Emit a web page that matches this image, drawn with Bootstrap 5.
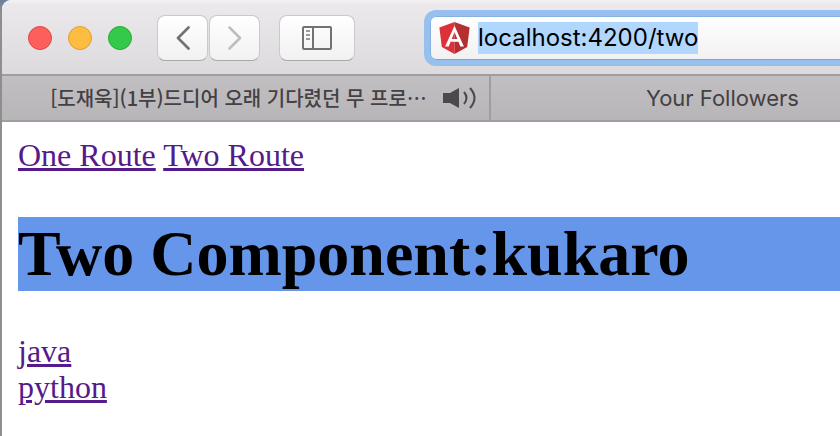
<!DOCTYPE html>
<html lang="ko">
<head>
<meta charset="utf-8">
<meta name="viewport" content="width=device-width, initial-scale=1">
<title>localhost:4200/two</title>
<link href="https://cdn.jsdelivr.net/npm/bootstrap@5.3.0/dist/css/bootstrap.min.css" rel="stylesheet">
<style>
  body { background: linear-gradient(#6d8099, #8e8e8e 12px); font-family: Inter, "Noto Sans CJK KR", sans-serif; }
  .window { margin-left: 2px; min-height: 100vh; border-top-left-radius: 9px; background: #fff; }
  .toolbar { height: 76px; padding-top: 2px; padding-left: 26px; background: linear-gradient(#f4f2f4, #ebe9eb 4px, #dddadd); border-bottom: 2px solid #a09da0; }
  .light { width: 24px; height: 24px; border-radius: 50%; border: 1px solid; padding: 0; }
  .light-close { background: #fd605c; border-color: #e2463f; }
  .light-min { background: #fdbd40; border-color: #df9f33; }
  .light-zoom { background: #34c94b; border-color: #26ab35; }
  .tool { width: 51px; height: 46px; padding: 0; border: 1px solid #cbc9cb; border-bottom-color: #aaa8aa; border-radius: 8px; background: linear-gradient(#fff, #f1f1f1); }
  .tool svg { display: block; margin: auto; }
  .tool-wide { width: 76px; }
  .nav-pair { gap: 1px; margin-left: 25px; margin-right: 19px; }
  .address { min-width: 0; height: 56px; margin-left: 69px; padding: 0 0 0 9px; border: 6px solid #97c0ee; border-right: 0; border-radius: 12px 0 0 12px; background: linear-gradient(#fff, #f1f1f1) padding-box; box-shadow: inset 0 1px #86b2e3, inset 1px 0 #86b2e3, inset 0 -1px #76a3d8; }
  .address input { min-width: 0; height: 32px; padding: 0; border: 0; outline: 0; background: transparent; color: #000; font-size: 24px; line-height: 32px; }
  .address input::selection { background: #b2d7fe; color: #000; }
  .tabs { height: 46px; border-bottom: 2px solid #a09da0; background: linear-gradient(#c2bfc2, #b8b5b8); }
  .tab { color: #434143; font-size: 22px; line-height: 44px; text-decoration: none; white-space: nowrap; }
  .tab-video { border-right: 2px solid #a09da0; padding-right: 12px; }
  .tab-video .title { font-family: "Noto Sans CJK KR", sans-serif; font-size: 20px; font-weight: 500; }
  .tab-followers { padding-left: 114px; }
  .page { padding: 15px 0 15px 16px; color: #000; font-family: "Liberation Serif", "Times New Roman", serif; font-size: 32px; line-height: 36px; }
  .page a { color: #551a8b; }
  .page h1 { margin: 44px 0 42px; background: #6696ea; font-size: 64px; font-weight: 700; line-height: 74px; }
</style>
<script src="https://cdn.jsdelivr.net/npm/bootstrap@5.3.0/dist/js/bootstrap.bundle.min.js"></script>
</head>
<body class="overflow-hidden">
<div class="window overflow-hidden">
  <header class="toolbar d-flex align-items-center">
    <div class="d-flex flex-shrink-0 gap-3">
      <button class="light light-close" type="button" aria-label="Close"></button>
      <button class="light light-min" type="button" aria-label="Minimize"></button>
      <button class="light light-zoom" type="button" aria-label="Zoom"></button>
    </div>
    <div class="nav-pair d-flex flex-shrink-0">
      <button class="btn tool" type="button" aria-label="Back">
        <svg width="14" height="24" viewBox="0 0 14 24" fill="none" stroke="#727272" stroke-width="2.7" stroke-linecap="round" stroke-linejoin="round"><path d="M12.5 1.5 2 12l10.5 10.5"/></svg>
      </button>
      <button class="btn tool" type="button" aria-label="Forward">
        <svg width="14" height="24" viewBox="0 0 14 24" fill="none" stroke="#bdbdbd" stroke-width="2.5" stroke-linecap="round" stroke-linejoin="round"><path d="M1.5 1.5 12 12 1.5 22.5"/></svg>
      </button>
    </div>
    <button class="btn tool tool-wide flex-shrink-0" type="button" aria-label="Sidebar">
      <svg width="30" height="24" viewBox="0 0 30 24" fill="none" stroke="#727272" stroke-width="2"><rect x="1" y="1" width="28" height="22" rx="1"/><path d="M11 1v22"/><path d="M4 5h4M4 9h4M4 13h4" stroke="#999"/></svg>
    </button>
    <form class="address d-flex align-items-center flex-grow-1 gap-2">
      <svg class="flex-shrink-0" width="31" height="32" viewBox="0 0 31 32" aria-hidden="true"><path fill="#dd3039" d="M15.5 0 .4 5.4l2.4 19.5L15.5 32z"/><path fill="#b52e31" d="m15.5 0 15.1 5.4-2.4 19.5L15.5 32z"/><path fill="#fff" fill-rule="evenodd" d="M15.5 3.8 6.1 24.5h3.6l1.9-4.7h7.8l1.9 4.7h3.6zM18.3 16.9h-5.6l2.8-6.8z"/></svg>
      <input id="url" class="flex-grow-1" type="text" value="localhost:4200/two" aria-label="Address" spellcheck="false">
    </form>
  </header>
  <nav class="tabs d-flex" aria-label="Tabs">
    <div class="tab tab-video col-7 d-flex align-items-center justify-content-end gap-3">
      <a class="tab title" href="#">[도재욱](1부)드디어 오래 기다렸던 무 프로⋯</a>
      <button class="btn border-0 p-0 d-flex" type="button" aria-label="Mute tab">
        <svg width="34" height="24" viewBox="0 0 34 24" fill="none" stroke="#4b494b" stroke-width="2"><path fill="#4b494b" stroke="none" d="M0 7h7l9-5v20l-9-5H0z"/><path d="M21 6q5 6 0 12M27 2q9 10 0 20"/></svg>
      </button>
    </div>
    <a class="tab tab-followers col-5 text-center" href="#">Your Followers</a>
  </nav>
  <main class="page">
    <nav><a href="#one">One Route</a> <a href="#two">Two Route</a></nav>
    <h1>Two Component:kukaro</h1>
    <div><a href="#java">java</a></div>
    <div><a href="#python">python</a></div>
  </main>
</div>
<script>
  const url = document.getElementById('url');
  url.focus();
  url.select();
</script>
</body>
</html>
